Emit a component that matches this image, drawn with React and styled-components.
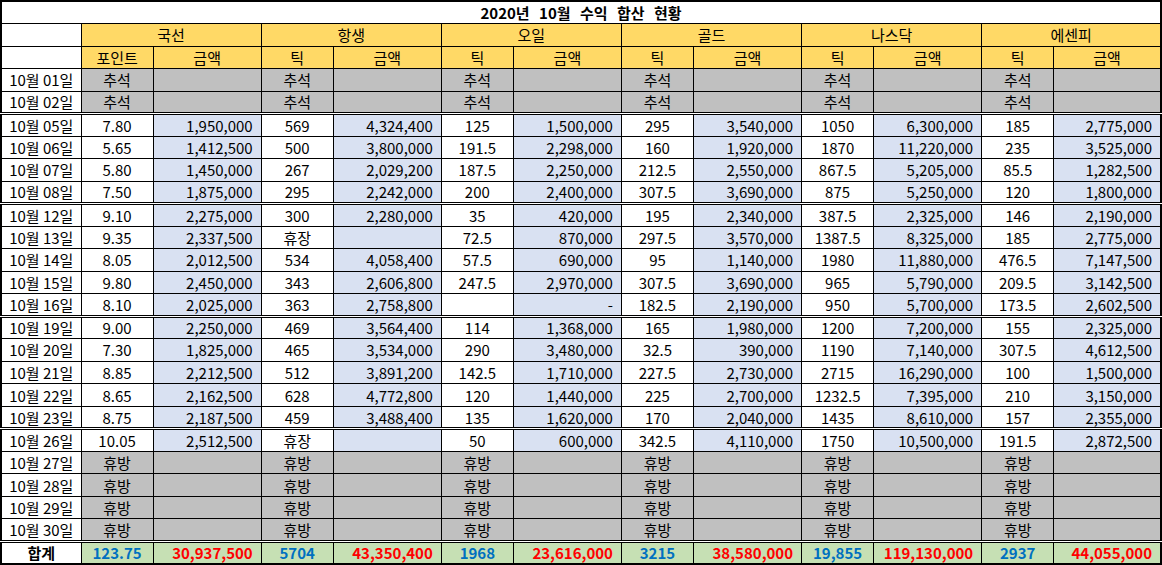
import styled, { createGlobalStyle } from "styled-components";

const GlobalStyle = createGlobalStyle`
  body {
    margin: 0;
    background: #fff;
    font-family: "Noto Sans CJK KR", "Noto Sans", sans-serif;
  }
`;

const Sheet = styled.table`
  width: 1162px;
  height: 565px;
  border-collapse: collapse;
  table-layout: fixed;
  border: 2px solid #000;
  font-size: 15px;
  color: #000;
  line-height: 1;

  td {
    border: 1px solid #000;
    padding: 0;
    white-space: nowrap;
    overflow: hidden;
  }
`;

const Row = styled.tr`
  height: 22px;

  ${(p) => p.$weekStart && `& > td { border-top: 3px double #000; }`}
`;

const TitleCell = styled.td`
  text-align: center;
  font-weight: 700;
  word-spacing: 6px;
  background: #fff;
`;

const HeadCell = styled.td`
  text-align: center;
  background: #ffd966;
`;

const BlankHead = styled.td`
  background: #fff;
`;

const DateCell = styled.td`
  text-align: center;
  background: #fff;
`;

const TickCell = styled.td`
  text-align: center;
  background: ${(p) => (p.$off ? "#c0c0c0" : "#fff")};
`;

const AmountCell = styled.td`
  text-align: right;
  padding-right: 8px !important;
  background: ${(p) => (p.$off ? "#c0c0c0" : "#d9e1f2")};
`;

const SumCell = styled.td`
  background: #c6e0b4;
  font-weight: 700;
  text-align: ${(p) => (p.$amount ? "right" : "center")};
  padding-right: ${(p) => (p.$amount ? "8px" : "0")} !important;
  color: ${(p) => (p.$amount ? "#ff0000" : "#0070c0")};
`;

const SumLabel = styled.td`
  background: #fff;
  font-weight: 700;
  text-align: center;
`;

const markets = [
  { name: "국선", unit: "포인트" },
  { name: "항생", unit: "틱" },
  { name: "오일", unit: "틱" },
  { name: "골드", unit: "틱" },
  { name: "나스닥", unit: "틱" },
  { name: "에센피", unit: "틱" },
];

const days = [
  { d: "01", off: "추석" },
  { d: "02", off: "추석" },
  { d: "05", week: true, v: [["7.80", "1,950,000"], ["569", "4,324,400"], ["125", "1,500,000"], ["295", "3,540,000"], ["1050", "6,300,000"], ["185", "2,775,000"]] },
  { d: "06", v: [["5.65", "1,412,500"], ["500", "3,800,000"], ["191.5", "2,298,000"], ["160", "1,920,000"], ["1870", "11,220,000"], ["235", "3,525,000"]] },
  { d: "07", v: [["5.80", "1,450,000"], ["267", "2,029,200"], ["187.5", "2,250,000"], ["212.5", "2,550,000"], ["867.5", "5,205,000"], ["85.5", "1,282,500"]] },
  { d: "08", v: [["7.50", "1,875,000"], ["295", "2,242,000"], ["200", "2,400,000"], ["307.5", "3,690,000"], ["875", "5,250,000"], ["120", "1,800,000"]] },
  { d: "12", week: true, v: [["9.10", "2,275,000"], ["300", "2,280,000"], ["35", "420,000"], ["195", "2,340,000"], ["387.5", "2,325,000"], ["146", "2,190,000"]] },
  { d: "13", v: [["9.35", "2,337,500"], ["휴장", ""], ["72.5", "870,000"], ["297.5", "3,570,000"], ["1387.5", "8,325,000"], ["185", "2,775,000"]] },
  { d: "14", v: [["8.05", "2,012,500"], ["534", "4,058,400"], ["57.5", "690,000"], ["95", "1,140,000"], ["1980", "11,880,000"], ["476.5", "7,147,500"]] },
  { d: "15", v: [["9.80", "2,450,000"], ["343", "2,606,800"], ["247.5", "2,970,000"], ["307.5", "3,690,000"], ["965", "5,790,000"], ["209.5", "3,142,500"]] },
  { d: "16", v: [["8.10", "2,025,000"], ["363", "2,758,800"], ["", "-"], ["182.5", "2,190,000"], ["950", "5,700,000"], ["173.5", "2,602,500"]] },
  { d: "19", week: true, v: [["9.00", "2,250,000"], ["469", "3,564,400"], ["114", "1,368,000"], ["165", "1,980,000"], ["1200", "7,200,000"], ["155", "2,325,000"]] },
  { d: "20", v: [["7.30", "1,825,000"], ["465", "3,534,000"], ["290", "3,480,000"], ["32.5", "390,000"], ["1190", "7,140,000"], ["307.5", "4,612,500"]] },
  { d: "21", v: [["8.85", "2,212,500"], ["512", "3,891,200"], ["142.5", "1,710,000"], ["227.5", "2,730,000"], ["2715", "16,290,000"], ["100", "1,500,000"]] },
  { d: "22", v: [["8.65", "2,162,500"], ["628", "4,772,800"], ["120", "1,440,000"], ["225", "2,700,000"], ["1232.5", "7,395,000"], ["210", "3,150,000"]] },
  { d: "23", v: [["8.75", "2,187,500"], ["459", "3,488,400"], ["135", "1,620,000"], ["170", "2,040,000"], ["1435", "8,610,000"], ["157", "2,355,000"]] },
  { d: "26", week: true, v: [["10.05", "2,512,500"], ["휴장", ""], ["50", "600,000"], ["342.5", "4,110,000"], ["1750", "10,500,000"], ["191.5", "2,872,500"]] },
  { d: "27", off: "휴방" },
  { d: "28", off: "휴방" },
  { d: "29", off: "휴방" },
  { d: "30", off: "휴방" },
];

const totals = [
  ["123.75", "30,937,500"],
  ["5704", "43,350,400"],
  ["1968", "23,616,000"],
  ["3215", "38,580,000"],
  ["19,855", "119,130,000"],
  ["2937", "44,055,000"],
];

export default function App() {
  return (
    <>
      <GlobalStyle />
      <Sheet>
        <colgroup>
          <col style={{ width: 80 }} />
          {markets.map((m, i) => [
            <col key={m.name + "t"} style={{ width: 72 }} />,
            <col key={m.name + "a"} style={{ width: i === 5 ? 107 : 108 }} />,
          ])}
        </colgroup>
        <tbody>
          <Row>
            <TitleCell colSpan={13}>2020년 10월 수익 합산 현황</TitleCell>
          </Row>
          <Row>
            <BlankHead />
            {markets.map((m) => (
              <HeadCell key={m.name} colSpan={2}>
                {m.name}
              </HeadCell>
            ))}
          </Row>
          <Row>
            <BlankHead />
            {markets.map((m) => [
              <HeadCell key={m.name + "u"}>{m.unit}</HeadCell>,
              <HeadCell key={m.name + "k"}>금액</HeadCell>,
            ])}
          </Row>
          {days.map((day) => (
            <Row key={day.d} $weekStart={!!day.week}>
              <DateCell>10월 {day.d}일</DateCell>
              {markets.map((m, i) =>
                day.off
                  ? [
                      <TickCell key={i + "t"} $off>
                        {day.off}
                      </TickCell>,
                      <AmountCell key={i + "a"} $off />,
                    ]
                  : [
                      <TickCell key={i + "t"}>{day.v[i][0]}</TickCell>,
                      <AmountCell key={i + "a"}>{day.v[i][1]}</AmountCell>,
                    ]
              )}
            </Row>
          ))}
          <Row $weekStart>
            <SumLabel>합계</SumLabel>
            {totals.map((t, i) => [
              <SumCell key={i + "t"}>{t[0]}</SumCell>,
              <SumCell key={i + "a"} $amount>
                {t[1]}
              </SumCell>,
            ])}
          </Row>
        </tbody>
      </Sheet>
    </>
  );
}
